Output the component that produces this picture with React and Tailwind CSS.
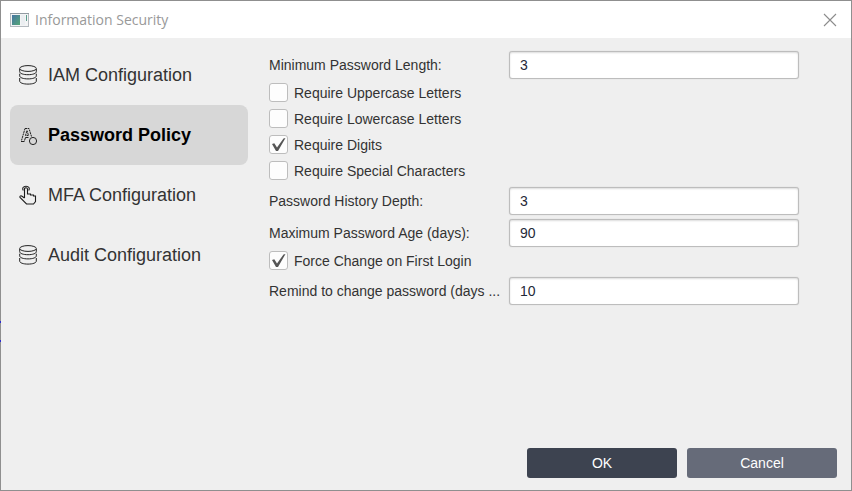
import React from 'react';

const DatabaseIcon = () => (
  <svg className="w-5 h-5" viewBox="0 0 20 20" fill="none" stroke="#222222" strokeWidth="1">
    <ellipse cx="10" cy="3.5" rx="8.300" ry="2.900" />
    <path d="M1.700 4v2.700c0 1.800 3.600 3 8.300 3s8.300-1.200 8.300-3V4" />
    <path d="M1.700 8.700v2.200c0 1.800 3.600 3 8.300 3s8.300-1.200 8.300-3V8.700" />
    <path d="M1.700 13v3.100c0 1.800 3.600 3 8.300 3s8.300-1.200 8.300-3V13" />
  </svg>
);

const PolicyIcon = () => (
  <svg className="w-5 h-5" viewBox="0 0 20 20" fill="none" stroke="#222222" strokeWidth="1">
    <path strokeDasharray="2 0.6" d="M7 3.500h4l2.500 8M7 3.500L3.500 15.500" />
    <path d="M3 16.500h3.500M6.500 15.500l1-3M7.500 12.500h3" />
    <path strokeDasharray="2 0.6" d="M7.500 10.500l1.500-5 1.500 5z" />
    <circle cx="15" cy="16" r="3.600" />
  </svg>
);

const TouchIcon = () => (
  <svg className="w-5 h-5" viewBox="0 0 20 20" fill="none" stroke="#1c1c1c" strokeWidth="1.1">
    <path d="M6.500 13V4c0-1.700 3-1.700 3 0v5h3v1h3v1h2v5.500l-2 2.500H8.500l-6.500-6.500c-.6-1.200.6-2.200 1.600-1.500L6.500 13" />
    <path d="M5.300 5.500C3.700 3.200 5.300 1.200 8 1.200s4.300 2 2.700 4.300" />
  </svg>
);

const WindowIcon = () => (
  <svg className="w-5 h-4" viewBox="0 0 20 16">
    <defs>
      <linearGradient id="screen" x1="0" y1="0" x2="1" y2="1">
        <stop offset="0" stopColor="#4674a2" />
        <stop offset="1" stopColor="#55a777" />
      </linearGradient>
    </defs>
    <rect x="0.500" y="1.500" width="18" height="13" fill="#f3f4f5" stroke="#b4babf" />
    <path d="M0 1.500h19" stroke="#929ba2" />
    <rect x="2" y="3" width="8" height="10" fill="url(#screen)" />
    <rect x="11" y="3" width="4" height="10" fill="#ebeef1" />
    <rect x="16" y="3" width="1" height="6" fill="#5a9d8c" />
  </svg>
);

const navItems = [
  { label: 'IAM Configuration', icon: DatabaseIcon },
  { label: 'Password Policy', icon: PolicyIcon, active: true },
  { label: 'MFA Configuration', icon: TouchIcon },
  { label: 'Audit Configuration', icon: DatabaseIcon },
];

const TextRow = ({ id, label, value }) => (
  <div className="flex items-center h-7">
    <label htmlFor={id} className="w-60 shrink-0 pr-2 truncate">{label}</label>
    <input
      id={id}
      type="text"
      defaultValue={value}
      className="flex-1 min-w-0 h-7 px-2.5 bg-white border border-[#bdbdbd] rounded-[3px] shadow-[inset_0_1px_2px_#dcdcdc,0_0_1px_#bdbdbd] text-[#1f2937] outline-none"
    />
  </div>
);

const CheckRow = ({ id, label, checked }) => (
  <div className="flex items-start h-[22px]">
    <span className="relative block w-[19px] h-[19px] shrink-0">
      <input
        id={id}
        type="checkbox"
        defaultChecked={checked}
        className="peer block appearance-none w-[19px] h-[19px] bg-[#fdfdfd] border border-[#bdbdbd] rounded-[3px]"
      />
      <svg className="absolute inset-0 w-[19px] h-[19px] hidden peer-checked:block pointer-events-none" viewBox="0 0 19 19">
        <path d="M3 9l2.300-.8 2.700 4.300 6.500-9 2-.5L9 16H7z" fill="#555555" />
      </svg>
    </span>
    <label htmlFor={id} className="pl-1.5 leading-5">{label}</label>
  </div>
);

const App = () => {
  return (
    <div className="relative flex flex-col min-h-screen bg-[#efefef] border border-[#8f8f8f] font-['Liberation_Sans',Arial,sans-serif] text-[#333333]">
      <span className="absolute -left-px top-80 w-px h-0.5 bg-[#2a2ad0]"></span>
      <span className="absolute -left-px top-[339px] w-px h-0.5 bg-[#2a2ad0]"></span>

      <header className="flex items-center h-[37px] pl-[9px] pr-3.5 bg-white">
        <WindowIcon />
        <h1 className="flex-1 pl-[5px] text-[14px] leading-5 font-['Open_Sans','Noto_Sans',sans-serif] text-[#999999]">
          Information Security
        </h1>
        <button type="button" aria-label="Close">
          <svg className="w-3.5 h-3.5" viewBox="0 0 14 14" fill="none" stroke="#8c8c8c" strokeWidth="1.1">
            <path d="M1 1l12 12M13 1L1 13" />
          </svg>
        </button>
      </header>

      <main className="flex flex-1">
        <nav className="w-[247px] shrink-0 pl-[9px] pt-[7px]">
          {navItems.map(({ label, icon: Icon, active }) => (
            <button
              key={label}
              type="button"
              className={
                active
                  ? 'flex items-center w-full h-[60px] pl-2 gap-2.5 rounded-lg bg-[#d7d7d7] text-[18px] font-bold text-black'
                  : 'flex items-center w-full h-[60px] pl-2 gap-2.5 rounded-lg text-[18px]'
              }
            >
              <Icon />
              {label}
            </button>
          ))}
        </nav>

        <form className="flex flex-col flex-1 min-w-0 gap-1 pt-[13px] pl-[21px] pr-[52px] text-[14px]">
          <TextRow id="min-length" label="Minimum Password Length:" value="3" />
          <CheckRow id="uppercase" label="Require Uppercase Letters" />
          <CheckRow id="lowercase" label="Require Lowercase Letters" />
          <CheckRow id="digits" label="Require Digits" checked />
          <CheckRow id="special" label="Require Special Characters" />
          <TextRow id="history" label="Password History Depth:" value="3" />
          <TextRow id="max-age" label="Maximum Password Age (days):" value="90" />
          <CheckRow id="force-change" label="Force Change on First Login" checked />
          <TextRow id="remind" label="Remind to change password (days ..." value="10" />
        </form>
      </main>

      <footer className="flex justify-end gap-2.5 pr-3.5 pb-3 text-[14px] text-white">
        <button type="button" className="w-[150px] h-[30px] rounded-[3px] bg-[#3d4350]">OK</button>
        <button type="button" className="w-[150px] h-[30px] rounded-[3px] bg-[#666b79]">Cancel</button>
      </footer>
    </div>
  );
};

export default App;
